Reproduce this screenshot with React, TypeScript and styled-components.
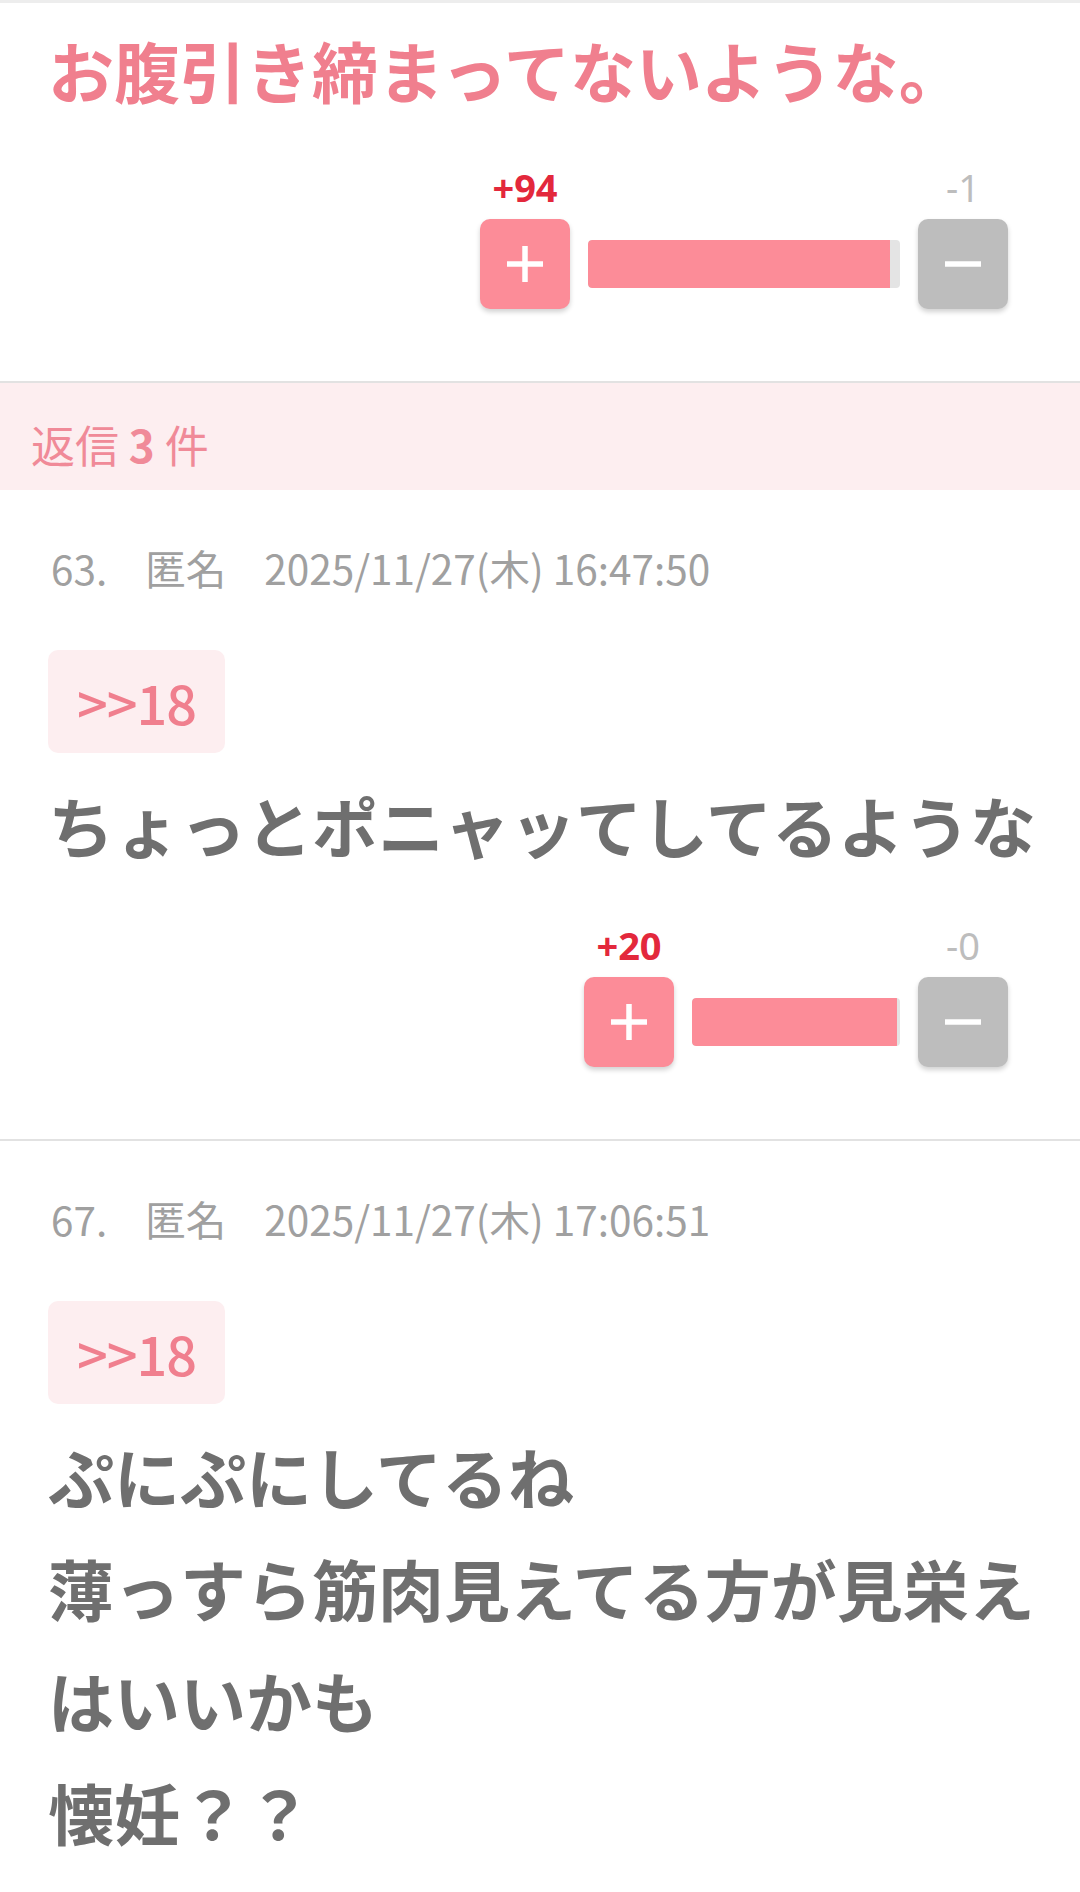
import styled, { createGlobalStyle } from 'styled-components'

const GlobalStyle = createGlobalStyle`
  html, body {
    margin: 0;
    padding: 0;
    background: #ffffff;
  }
  body {
    font-family: "Noto Sans CJK JP", "Noto Sans", sans-serif;
  }
`

const colors = {
  pink: '#fc8c98',
  pinkText: '#f07f8e',
  pinkSoft: '#fdeef0',
  red: '#e3283c',
  gray: '#bdbdbd',
  track: '#e4e4e4',
  body: '#6f6f6f',
  meta: '#a0a0a0',
  line: '#e2e2e2',
}

const Page = styled.main`
  width: 1080px;
  border-top: 3px solid #ededed;
`

const Post = styled.article`
  padding: ${({ $top }: { $top: number }) => $top}px 42px 72px 48px;
  border-bottom: 2px solid ${colors.line};
`

const Title = styled.h1`
  margin: 0;
  font-size: 66px;
  line-height: 112px;
  font-weight: 700;
  color: ${colors.pinkText};
`

const Body = styled.p`
  margin: 15px 0 0;
  font-size: 66px;
  line-height: 112px;
  font-weight: 700;
  color: ${colors.body};
  white-space: pre-line;
`

const Meta = styled.div`
  display: flex;
  padding-left: 3px;
  font-size: 40.5px;
  line-height: 56px;
  color: ${colors.meta};

  span {
    margin-right: 38px;
  }
`

const Anchor = styled.div`
  display: inline-flex;
  align-items: center;
  height: 103px;
  margin-top: 54px;
  padding: 0 29px;
  border-radius: 10px;
  background: ${colors.pinkSoft};
  color: ${colors.pinkText};
  font-size: 54px;
  font-weight: 500;
  letter-spacing: -1px;
`

const RepliesBand = styled.div`
  height: 107px;
  box-sizing: border-box;
  padding: 31px 31px 0;
  background: ${colors.pinkSoft};
  color: #f08a98;
  font-size: 44px;
  line-height: 60px;

  b {
    font-weight: 700;
  }
`

const VoteRow = styled.div<{ $gap: number }>`
  display: flex;
  justify-content: flex-end;
  margin: ${({ $gap }) => $gap}px 30px 0 0;
`

const VoteGrid = styled.div`
  display: grid;
  grid-template-columns: 90px ${({ $bar }: { $bar: number }) => $bar}px 90px;
  grid-template-rows: 44px 90px;
  column-gap: 18px;
  row-gap: 10px;
`

const Count = styled.span<{ $col: number; $plus?: boolean }>`
  grid-column: ${({ $col }) => $col};
  grid-row: 1;
  justify-self: center;
  font-family: "Noto Sans", sans-serif;
  font-size: 38px;
  line-height: 44px;
  font-weight: ${({ $plus }) => ($plus ? 700 : 400)};
  color: ${({ $plus }) => ($plus ? colors.red : colors.gray)};
`

const VoteButton = styled.button<{ $col: number; $plus?: boolean }>`
  grid-column: ${({ $col }) => $col};
  grid-row: 2;
  display: flex;
  align-items: center;
  justify-content: center;
  width: 90px;
  height: 90px;
  padding: 0;
  border: none;
  border-radius: 10px;
  background: ${({ $plus }) => ($plus ? colors.pink : colors.gray)};
  box-shadow: 0 3px 5px rgba(0, 0, 0, 0.18);
  cursor: pointer;
`

const Track = styled.div`
  grid-column: 2;
  grid-row: 2;
  align-self: center;
  height: 48px;
  border-radius: 4px;
  background: ${colors.track};
  overflow: hidden;
`

const Fill = styled.div`
  height: 100%;
  background: ${colors.pink};
  border-radius: 4px 0 0 4px;
`

const Sign = ({ plus }: { plus?: boolean }) => (
  <svg width="38" height="38" viewBox="0 0 38 38">
    <line x1="1" y1="19" x2="37" y2="19" stroke="#fff" strokeWidth="5.5" />
    {plus && <line x1="19" y1="1" x2="19" y2="37" stroke="#fff" strokeWidth="5.5" />}
  </svg>
)

type VoteProps = { up: number; down: number; bar: number; fill: number; gap?: number }

const Votes = ({ up, down, bar, fill, gap = 40 }: VoteProps) => (
  <VoteRow $gap={gap}>
    <VoteGrid $bar={bar}>
      <Count $col={1} $plus>+{up}</Count>
      <Count $col={3}>-{down}</Count>
      <VoteButton $col={1} $plus>
        <Sign plus />
      </VoteButton>
      <Track>
        <Fill style={{ width: `${fill}%` }} />
      </Track>
      <VoteButton $col={3}>
        <Sign />
      </VoteButton>
    </VoteGrid>
  </VoteRow>
)

const replies = [
  {
    no: 63,
    date: '2025/11/27(木) 16:47:50',
    text: 'ちょっとポニャッてしてるような',
    votes: { up: 20, down: 0, bar: 208, fill: 98.5, gap: 43 },
  },
  {
    no: 67,
    date: '2025/11/27(木) 17:06:51',
    text: 'ぷにぷにしてるね\n薄っすら筋肉見えてる方が見栄えはいいかも\n懐妊？？',
    votes: null,
  },
]

export default function App() {
  return (
    <>
      <GlobalStyle />
      <Page>
        <Post $top={10}>
          <Title>お腹引き締まってないような。</Title>
          <Votes up={94} down={1} bar={312} fill={96.8} />
        </Post>
        <RepliesBand>
          返信 <b>3</b> 件
        </RepliesBand>
        {replies.map((r) => (
          <Post key={r.no} $top={50}>
            <Meta>
              <span>{r.no}.</span>
              <span>匿名</span>
              {r.date}
            </Meta>
            <Anchor>&gt;&gt;18</Anchor>
            <Body>{r.text}</Body>
            {r.votes && <Votes {...r.votes} />}
          </Post>
        ))}
      </Page>
    </>
  )
}
